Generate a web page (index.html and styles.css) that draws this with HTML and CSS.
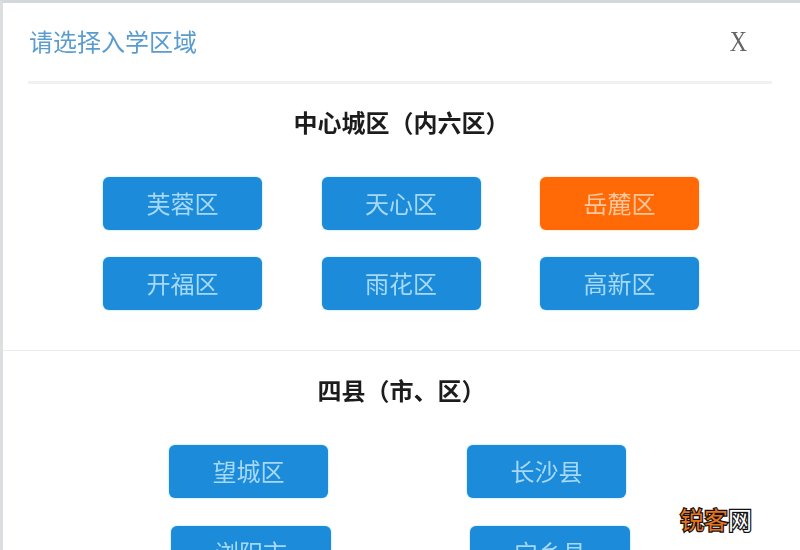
FILE: index.html
```html
<!DOCTYPE html>
<html lang="zh-CN">
<head>
<meta charset="utf-8">
<title>请选择入学区域</title>
<link rel="stylesheet" href="styles.css">
</head>
<body>
<main class="dialog">
  <header class="dialog-head">
    <h1 class="dialog-title">请选择入学区域</h1>
    <span class="dialog-close">X</span>
  </header>
  <section class="area area-city">
    <h2 class="area-title">中心城区（内六区）</h2>
    <div class="btn-grid">
      <a class="btn">芙蓉区</a>
      <a class="btn">天心区</a>
      <a class="btn btn-active">岳麓区</a>
      <a class="btn">开福区</a>
      <a class="btn">雨花区</a>
      <a class="btn">高新区</a>
    </div>
  </section>
  <section class="area area-county">
    <h2 class="area-title">四县（市、区）</h2>
    <div class="btn-pair">
      <a class="btn">望城区</a>
      <a class="btn">长沙县</a>
    </div>
    <div class="btn-pair btn-pair-shift">
      <a class="btn">浏阳市</a>
      <a class="btn">宁乡县</a>
    </div>
  </section>
</main>
<div class="watermark"><span class="wm-orange">锐客</span><span class="wm-white">网</span></div>
</body>
</html>
```
FILE: styles.css
```css
* { box-sizing: border-box; }
html, body { margin: 0; height: 550px; overflow: hidden; background: #fff; }
body { font-family: "Noto Sans CJK SC", "Liberation Sans", sans-serif; }
.dialog {
  width: 800px;
  height: 550px;
  overflow: hidden;
  border-top: 3px solid #d3d8da;
  border-left: 3px solid #dcdfe0;
}
.dialog-head {
  display: flex;
  align-items: center;
  justify-content: space-between;
  height: 81px;
  margin: 0 28px 0 25px;
  padding: 0 25px 2px 1px;
  border-bottom: 3px solid #f1f1f1;
}
.dialog-title {
  margin: 0;
  font-size: 24px;
  line-height: 32px;
  font-weight: 400;
  color: #5a9ccf;
  filter: blur(.7px);
}
.dialog-close {
  font-family: "Liberation Serif", serif;
  font-size: 24px;
  line-height: 32px;
  color: #666;
  transform: scaleY(1.2);
  filter: blur(.6px);
}
.area-title {
  margin: 0;
  text-align: center;
  font-size: 24px;
  line-height: 32px;
  font-weight: 700;
  color: #1c1c1c;
  filter: blur(.6px);
}
.area-city {
  height: 267px;
  padding-top: 22px;
  border-bottom: 1px solid #e9eeee;
}
.area-county { padding-top: 23px; }
.btn-grid {
  display: grid;
  grid-template-columns: repeat(3, 159px);
  column-gap: 59.5px;
  row-gap: 27px;
  justify-content: center;
  margin-top: 39px;
  padding-right: 1px;
}
.btn-pair {
  display: flex;
  gap: 139px;
  margin-top: 39px;
  padding-left: 166px;
}
.btn-pair-shift {
  margin-top: 28px;
  padding-left: 168px;
}
.btn-pair-shift .btn { width: 160px; }
.btn {
  display: block;
  width: 159px;
  height: 53px;
  border-radius: 6px;
  background: #1c8bd9;
  box-shadow: 0 0 2px #8fd6f8;
  color: #a6d9f6;
  font-size: 24px;
  line-height: 51px;
  text-align: center;
  filter: blur(.5px);
}
.btn-active {
  background: #ff6a07;
  box-shadow: 0 0 2px #ffc48f;
  color: #fbc79c;
}
.watermark {
  position: absolute;
  left: 680px;
  top: 506px;
  font-size: 24px;
  line-height: 26px;
  font-weight: 400;
  -webkit-text-stroke: 2.5px #111;
  paint-order: stroke fill;
}
.wm-orange { color: #e8731a; }
.wm-white { color: #fff; }
```
